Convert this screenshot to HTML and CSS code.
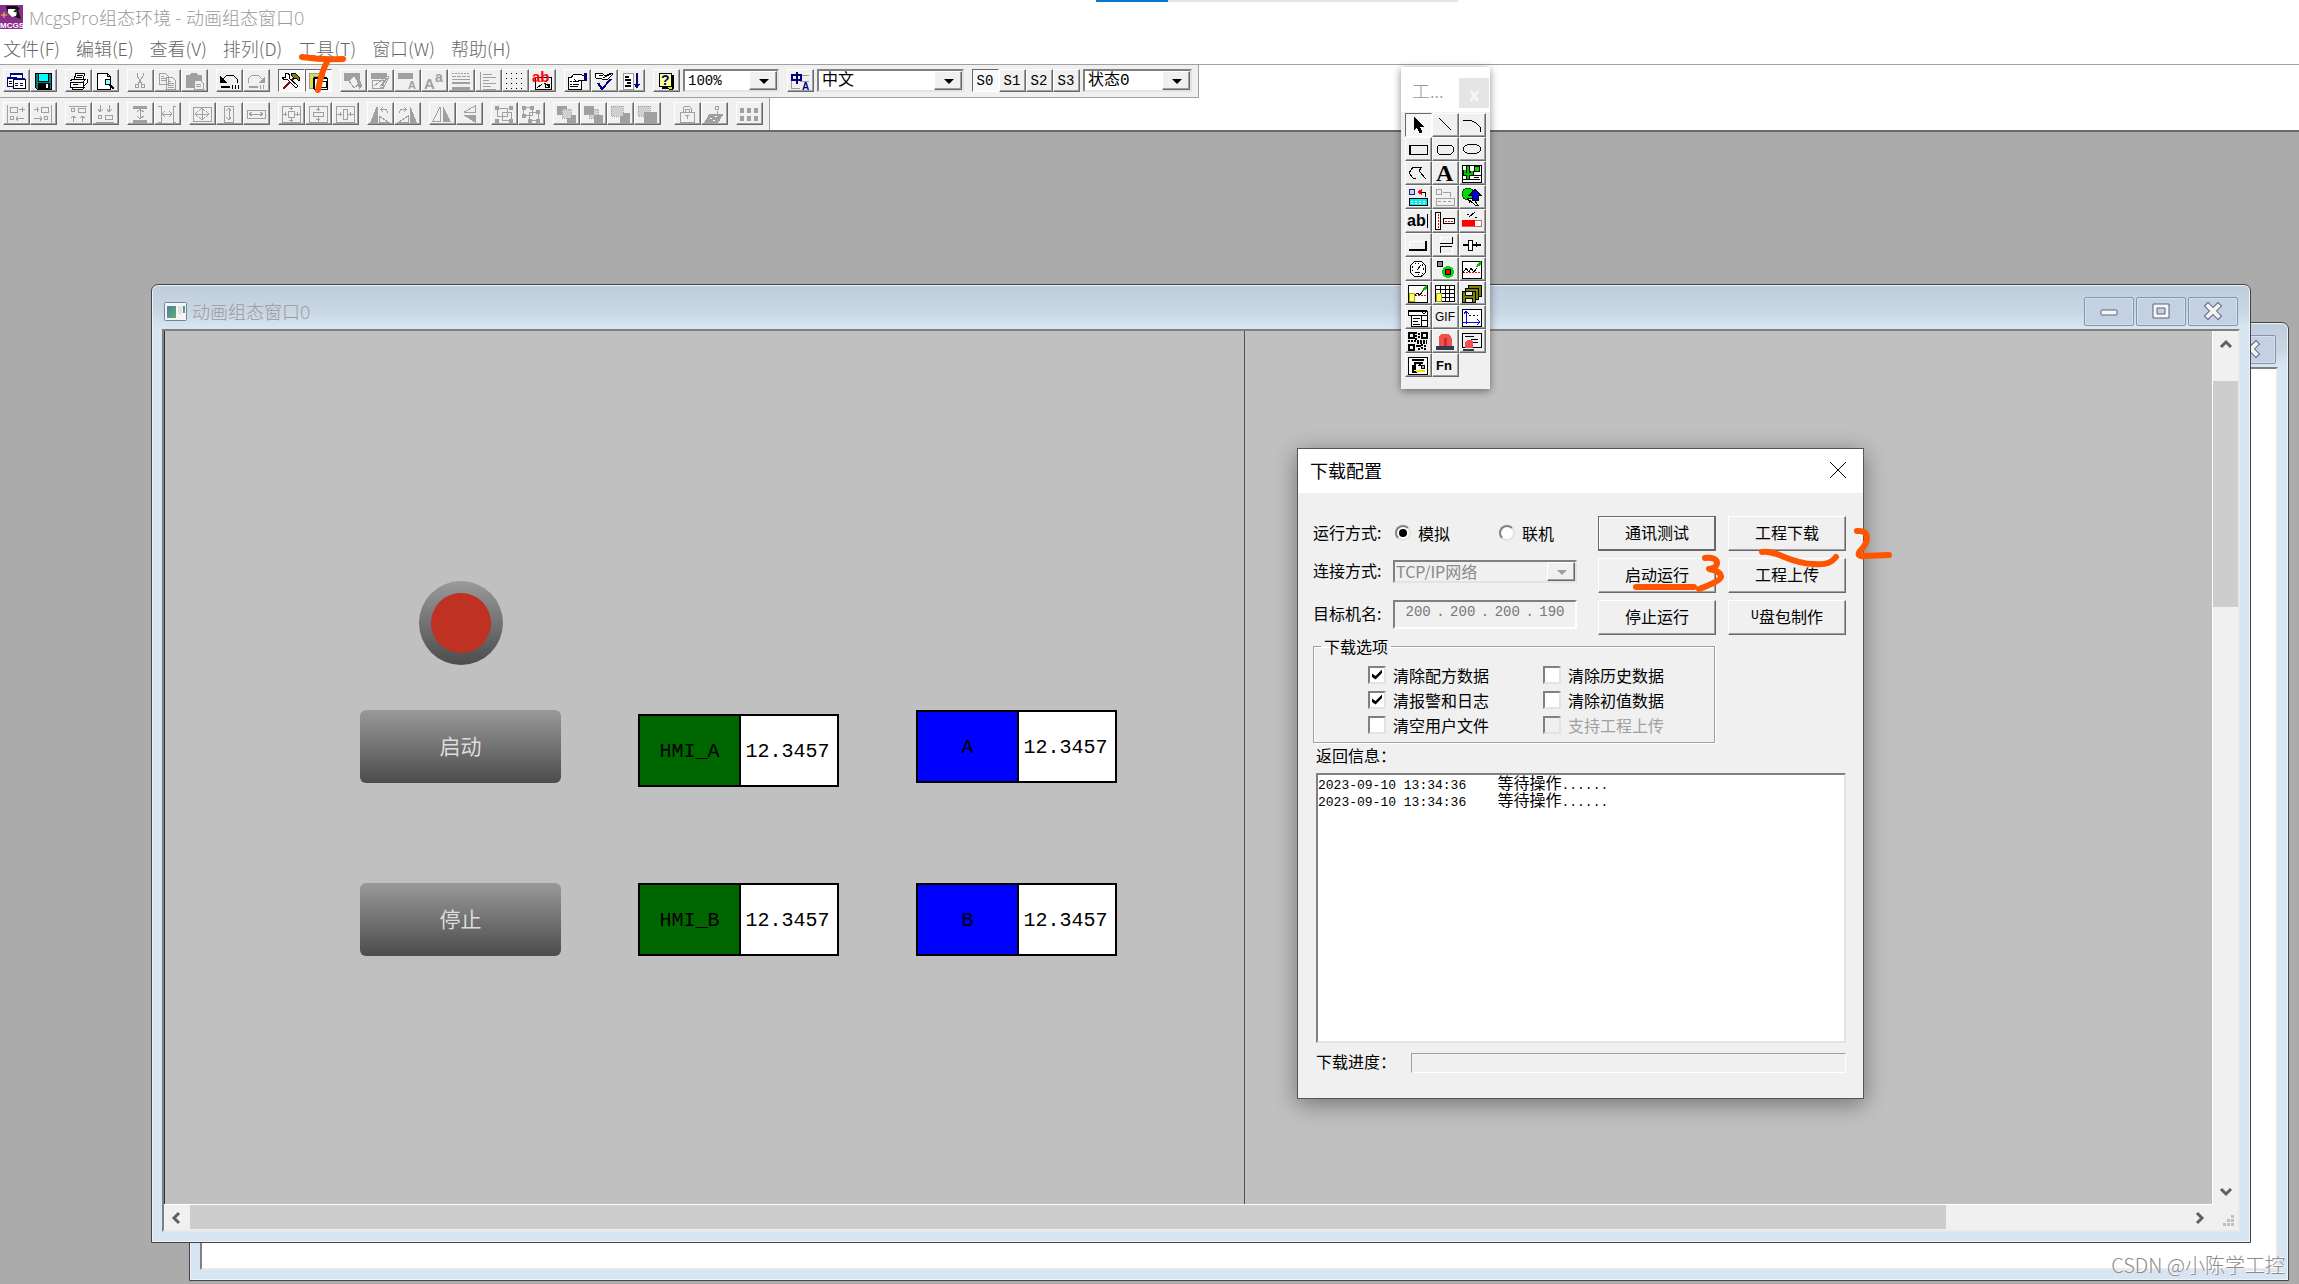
FILE: index.html
```html
<!DOCTYPE html>
<html lang="zh-CN">
  <head>
    <meta charset="UTF-8">
    <meta name="viewport" content="width=device-width, initial-scale=1.0">
    <title>McgsPro组态环境 - 动画组态窗口0</title>
    <link rel="stylesheet" href="styles.css">
  </head>
  <body>
    <header class="titlebar">
      <svg class="app-logo" viewBox="0 0 23 24">
        <rect width="23" height="24" fill="#8a2d8c"/>
        <path d="M6 1h11l3 3-2 1 3 9-6-2-6-3-2-4z" fill="#111"/>
        <path d="M8 4h7l2 3-1 4-4 1-4-4z" fill="#fff"/>
        <path d="M13 6l3-1 1 3" fill="#111"/>
        <path d="M1 10h6M4 7v6" stroke="#e8d040"/>
        <text x="0" y="23" font-size="8" font-weight="700" class="white">MCGS</text>
      </svg>
      <span>McgsPro组态环境 - 动画组态窗口0</span>
    </header>
    <nav class="menubar">
      <button>文件(F)</button>
      <button>编辑(E)</button>
      <button>查看(V)</button>
      <button>排列(D)</button>
      <button>工具(T)</button>
      <button>窗口(W)</button>
      <button>帮助(H)</button>
    </nav>

    <div class="toolbar toolbar-main">
      <div class="group">
        <button aria-label="工作台"><svg viewBox="0 0 20 18"><path d="M4 1h12v11H4z" fill="#fff" stroke="#000080"/><path d="M4 2h12" stroke="#000080" stroke-width="2"/><path d="M1 5h9v9H1z" fill="#fff" stroke="#000080"/><path d="M1 6h9" stroke="#000080" stroke-width="2"/><path d="M3 9h3M3 11h3"/><path d="M7 7h12v9H7z" fill="#fff"/><path d="M7 7h12" stroke="#000080" stroke-width="2"/><path d="M9 11h3M14 11h3M9 13h3M14 13h3" stroke="#000080"/></svg></button>
        <button aria-label="保存"><svg viewBox="0 0 20 18"><path d="M2 1h16v16H4l-2-2z" fill="#008080"/><path d="M5 1h10v8H5z" fill="#0ff"/><path d="M5 11h11v6H5z" fill="#000"/><path d="M13 12h2v4h-2z" fill="#fff" stroke="none"/></svg></button>
      </div>
      <div class="group">
        <button aria-label="打印"><svg viewBox="0 0 20 18"><path d="M6 8l2-7h9l-2 7M2 9l3-2h13l-3 3H2v5h13l4-4V7M15 10v5M4 15v2h11l2-2" fill="#fff"/><path d="M2 10h13M3 15h13M9 3h6M8 5h6M5 12h8"/><path d="M10 12h3" stroke="#dd0"/></svg></button>
        <button aria-label="打印预览"><svg viewBox="0 0 20 18"><path d="M2 1h10l3 3v13H2z" fill="#fff"/><path d="M12 1v3h3"/><circle cx="13" cy="10" r="3" fill="#8ff"/><path d="M15 13l4 4" stroke-width="2"/></svg></button>
      </div>
      <div class="group">
        <button disabled aria-label="剪切"><svg viewBox="0 0 20 18"><path d="M7 1v3l5 8M13 1v3l-5 8"/><circle cx="7" cy="14" r="2"/><circle cx="13" cy="14" r="2"/></svg></button>
        <button disabled aria-label="复制"><svg viewBox="0 0 20 18"><path d="M2 1h6l3 3v8H2zM4 4h3M4 6h5M4 8h5M9 5h6l3 3v9H9z" fill="#f0f0f0"/><path d="M11 9h3M11 11h6M11 13h6M11 15h6"/></svg></button>
        <button disabled aria-label="粘贴"><svg viewBox="0 0 20 18"><path d="M2 3h4l2-2h4l2 2h3v12H2z" fill="#a0a0a0"/><path d="M10 8h6l3 3v6h-9z" fill="#f0f0f0"/><path d="M12 12h5M12 14h5M6 4h8"/></svg></button>
      </div>
      <div class="group">
        <button aria-label="撤消"><svg viewBox="0 0 20 18"><path d="M4 7l4-4h6l4 4v4"/><path d="M1 4v7h7z" fill="#000" stroke="none"/><path d="M2 15h9" stroke-width="2"/><path d="M13 13v4M16 13v4M19 13v4"/></svg></button>
        <button disabled aria-label="重做"><svg viewBox="0 0 20 18"><path d="M16 7l-4-4H6L2 7v4"/><path d="M19 4v7h-7z" fill="#a0a0a0" stroke="none"/><path d="M3 15h9" stroke-width="2"/><path d="M14 13v4M17 13v4"/></svg></button>
      </div>
      <div class="group">
        <button class="pressed" aria-label="工具箱"><svg viewBox="0 0 20 18"><path d="M2 17L14 5" stroke="#7a1010" stroke-width="2"/><path d="M10 2l4-1 5 5-1 3-3-3-2 1z" fill="#808000"/><path d="M4 2v3H1l2 3 3-1 9 9 2-2-9-8 1-3-3-2z" fill="#fff"/></svg></button>
        <button class="pressed" aria-label="绘图工具"><svg viewBox="0 0 20 18"><path d="M1 1h15v3H5v12H1z" fill="#dcdc50" stroke="#999"/><path d="M6 6h13v11H6z" fill="#fff"/><path d="M6 6h13M6 6v11" stroke-width="2"/><path d="M9 9h9v6H9z"/></svg></button>
      </div>
      <div class="group">
        <button disabled aria-label="填充色"><svg viewBox="0 0 20 18"><path d="M1 1h15v7H1z" class="solid"/><path d="M6 9l5-5 6 7-6 5z" fill="#f0f0f0"/><path d="M13 5l3 2 3 7-3 3" class="solid"/></svg></button>
        <button disabled aria-label="线色"><svg viewBox="0 0 20 18"><path d="M1 1h15v5H1z" class="solid"/><path d="M2 8h11v8H2zM4 14l13-10 2 1-5 10-4 1" fill="#f0f0f0"/><path d="M11 14l6-8" stroke-width="2"/></svg></button>
        <button disabled aria-label="字符色"><svg viewBox="0 0 20 18"><path d="M1 1h14v5H1z" class="solid"/><text x="11" y="17" font-size="11" font-weight="700">A</text></svg></button>
        <button disabled aria-label="字符字体"><svg viewBox="0 0 20 18"><text x="0" y="17" font-size="15" font-weight="700">A</text><text x="11" y="10" font-size="14" font-weight="700">a</text></svg></button>
        <button disabled aria-label="线型"><svg viewBox="0 0 20 18"><path d="M1 1h18" stroke-dasharray="2 1"/><path d="M1 4h18" stroke-dasharray="4 1"/><path d="M1 7h18"/><path d="M1 11h18" stroke-width="2"/><path d="M1 16h18" stroke-width="3"/></svg></button>
        <button disabled aria-label="对齐"><svg viewBox="0 0 20 18"><path d="M2 0v18M5 2h9M5 5h13M5 8h6M5 11h13M5 14h8M5 17h13"/></svg></button>
        <button aria-label="网格"><svg viewBox="0 0 20 18"><path d="M1 1h19M1 6h19M1 11h19M1 16h19" stroke-dasharray="1 4"/></svg></button>
        <button aria-label="字符边距"><svg viewBox="0 0 20 18"><path d="M3 5h16v12H3z"/><path d="M5 16l5-4M18 15l-6-4M13 12h4v3h-4z"/><text x="0" y="10" font-size="15" font-weight="700" class="red">ab</text></svg></button>
      </div>
      <div class="group">
        <button aria-label="属性"><svg viewBox="0 0 20 18"><path d="M1 5h13v12H1z" fill="#fff"/><path d="M3 9h2M6 9h6M3 12h2M6 12h6M3 14h8"/><path d="M4 6l3-4h6l4 2v4h-5l-2 2-3-3" fill="#fff"/><path d="M18 1v8" stroke="#000080" stroke-width="3"/></svg></button>
        <button aria-label="组态检查"><svg viewBox="0 0 20 18"><path d="M1 1h7l3 3 6-3 2 1-5 5H8L6 6H2z" fill="#fff"/><path d="M5 3h4M9 6l8-4"/><path d="M4 11l4 6 9-10" stroke="#000080" stroke-width="2"/></svg></button>
        <button aria-label="排序"><svg viewBox="0 0 20 18"><path d="M2 1h10v16H2z" fill="#fff" stroke="#999"/><path d="M4 5h4M4 8h6M6 11h4M4 14h6" stroke-width="2"/><path d="M16 1v13" stroke="#000080" stroke-width="2"/><path d="M13 12h6l-3 5z" fill="#000080" stroke="none"/></svg></button>
      </div>
      <div class="group">
        <button aria-label="帮助"><svg viewBox="0 0 20 18"><path d="M6 3h11v13H6z" fill="#000"/><path d="M3 1h12v13H3z" fill="#ff9"/><path d="M10 14h6v3h-3z" fill="#ee0"/><text x="5" y="13" font-size="14" font-weight="700" class="blue">?</text></svg></button>
        <span class="combo combo-zoom"><select aria-label="缩放"><option>100%</option></select></span>
      </div>
      <div class="group">
        <button aria-label="语言"><svg viewBox="0 0 20 18"><path d="M1 3h18M10 9h9M1 9v7h9" stroke="#999"/><path d="M2 3h9v5H2zM7 0v12" stroke="#000080" stroke-width="2"/><text x="12" y="18" font-size="10" font-weight="700" class="blue">A</text></svg></button>
        <span class="combo combo-lang"><select aria-label="语言选择"><option>中文</option></select></span>
      </div>
      <div class="group">
        <button class="pressed">S0</button>
        <button>S1</button>
        <button>S2</button>
        <button>S3</button>
        <span class="combo combo-state"><select aria-label="状态"><option>状态0</option></select></span>
      </div>
    </div>

    <div class="toolbar">
      <div class="group">
        <button disabled aria-label="左对齐"><svg viewBox="0 0 20 18"><path d="M1 0v18M4 2h7v5H4zM13 4h6M16 2v5M10 13h8M12 11l-2 2 2 3"/><circle cx="6" cy="13" r="2"/></svg></button>
        <button disabled aria-label="右对齐"><svg viewBox="0 0 20 18"><path d="M18 0v18M8 2h7v5H8zM1 4h5M4 2v5M1 13h8M7 11l2 2-2 3"/><circle cx="13" cy="13" r="2"/></svg></button>
      </div>
      <div class="group">
        <button disabled aria-label="顶对齐"><svg viewBox="0 0 20 18"><path d="M1 1h18M10 3h7v4h-7zM5 17v-6M3 13l2-2 3 2M14 17v-6M12 13l2-2 3 2"/><circle cx="5" cy="5" r="2"/></svg></button>
        <button disabled aria-label="底对齐"><svg viewBox="0 0 20 18"><path d="M1 17h18M10 10h7v4h-7zM5 0v7M3 4l2 3 3-3M14 0v7M12 4l2 3 3-3"/><circle cx="5" cy="12" r="2"/></svg></button>
      </div>
      <div class="group">
        <button disabled aria-label="纵向等间距"><svg viewBox="0 0 20 18"><path d="M3 2h14M3 16h14" stroke-width="3"/><path d="M10 4v10M7 7l3-3 4 3M7 11l3 3 4-3"/></svg></button>
        <button disabled aria-label="横向等间距"><svg viewBox="0 0 20 18"><path d="M1 1h3v16H1M19 1h-3v16h3M5 9h10M8 6L5 9l3 3M12 6l3 3-3 3"/></svg></button>
      </div>
      <div class="group">
        <button disabled aria-label="等高宽"><svg viewBox="0 0 20 18"><path d="M1 2h18v14H1zM3 9h14M10 3v12M6 6L3 9l3 3M14 6l3 3-3 3M7 6l3-3 3 3M7 12l3 3 3-3"/></svg></button>
        <button disabled aria-label="等高"><svg viewBox="0 0 20 18"><path d="M5 1h9v16H5zM10 3v12M7 6l3-3 2 3M7 12l3 3 2-3"/></svg></button>
        <button disabled aria-label="等宽"><svg viewBox="0 0 20 18"><path d="M1 5h18v8H1zM3 9h14M6 7L3 9l3 2M14 7l3 2-3 2"/></svg></button>
      </div>
      <div class="group">
        <button disabled aria-label="窗口居中"><svg viewBox="0 0 20 18"><path d="M1 1h18v16H1zM7 6h6v6H7zM10 1v4M10 13v4M1 9h5M14 9h5"/><path d="M8 3h4M8 15h4M4 7v4M16 7v4"/></svg></button>
        <button disabled aria-label="纵向居中"><svg viewBox="0 0 20 18"><path d="M1 1h18v16H1zM5 7h10v4H5zM10 1v5M10 12v5M8 4h4M8 14h4"/></svg></button>
        <button disabled aria-label="横向居中"><svg viewBox="0 0 20 18"><path d="M1 1h18v16H1zM8 4h4v10H8zM1 9h6M13 9h6M5 7v4M15 7v4"/></svg></button>
      </div>
      <div class="group">
        <button disabled aria-label="左旋"><svg viewBox="0 0 20 18"><path d="M7 2v15H1z" class="solid"/><path d="M9 17v-6l9 6zM10 5l3-3M10 4h6l2 4M10 4l3 3"/></svg></button>
        <button disabled aria-label="右旋"><svg viewBox="0 0 20 18"><path d="M13 2v15h6z" class="solid"/><path d="M11 17v-6l-9 6zM10 5L7 2M10 4H4L2 8M10 4L7 7"/></svg></button>
      </div>
      <div class="group">
        <button disabled aria-label="左右镜像"><svg viewBox="0 0 20 18"><path d="M8 2v14H1z"/><path d="M11 2v14h7z" class="solid"/></svg></button>
        <button disabled aria-label="上下镜像"><svg viewBox="0 0 20 18"><path d="M16 1v6H5z"/><path d="M16 17v-7H5z" class="solid"/></svg></button>
      </div>
      <div class="group">
        <button disabled aria-label="构成图符"><svg viewBox="0 0 20 18"><path d="M3 3h10v8H3zM8 7h9v8H8z"/><path d="M1 1h3v3H1zM15 1h3v3h-3zM1 14h3v3H1zM15 14h3v3h-3z" class="solid"/></svg></button>
        <button disabled aria-label="分解图符"><svg viewBox="0 0 20 18"><path d="M2 2h9v8H2zM8 7h9v8H8z"/><path d="M1 1h3v3H1zM9 1h3v3H9zM1 9h3v3H1zM15 5h3v3h-3zM7 14h3v3H7zM15 14h3v3h-3z" class="solid"/></svg></button>
      </div>
      <div class="group">
        <button disabled aria-label="置顶"><svg viewBox="0 0 20 18"><path d="M1 1h9v8H1zM11 10h8v7h-8z" class="solid"/><path d="M6 4h9v9H6z" class="dither"/></svg></button>
        <button disabled aria-label="置底"><svg viewBox="0 0 20 18"><path d="M6 4h9v9H6z" class="dither"/><path d="M1 1h9v8H1zM11 10h8v7h-8z" class="solid"/></svg></button>
        <button disabled aria-label="前移一层"><svg viewBox="0 0 20 18"><path d="M10 8h9v9h-9z" class="solid"/><path d="M1 1h12v10H1z" class="dither"/></svg></button>
        <button disabled aria-label="后移一层"><svg viewBox="0 0 20 18"><path d="M1 1h12v10H1z" class="dither"/><path d="M7 7h12v10H7z" class="solid"/></svg></button>
      </div>
      <div class="group group-lock">
        <button disabled aria-label="锁定"><svg viewBox="0 0 20 18"><path d="M3 7h14v10H3zM6 7V3l2-2h4l2 2v4M8 7V4h4v3M8 10h4M10 10v4"/></svg></button>
        <button disabled aria-label="固化"><svg viewBox="0 0 20 18"><circle cx="13" cy="3" r="2"/><path d="M13 6v6"/><path d="M6 9h13l-5 8H1z" class="solid"/><path d="M6 13h2M11 11h2M9 15h2" stroke="#fff"/></svg></button>
      </div>
      <div class="group">
        <button disabled aria-label="多重复制"><svg viewBox="0 0 20 18"><path d="M1 3h4v5H1zM8 3h4v5H8zM15 3h4v5h-4zM1 11h4v5H1zM8 11h4v5H8zM15 11h4v5h-4z" class="solid bare"/></svg></button>
      </div>
    </div>

    <main class="workspace">
      <section class="window window-back">
        <div class="window-title">
          <div class="window-buttons">
            <button aria-label="最小化"></button>
            <button aria-label="最大化"></button>
            <button aria-label="关闭"><svg viewBox="0 0 20 18"><path d="M5 4l10 10M15 4L5 14" stroke="#5a6478" stroke-width="6" stroke-linecap="square"/><path d="M5 4l10 10M15 4L5 14" stroke="#f2f2f2" stroke-width="4" stroke-linecap="square"/></svg></button>
          </div>
        </div>
        <div class="window-client"></div>
      </section>

      <section class="window window-front">
        <div class="window-title">
          <svg class="window-icon" viewBox="0 0 23 19">
            <defs><linearGradient id="pane" x1="0" y1="0" x2="1" y2="1"><stop offset="0" stop-color="#4a7fa8"/><stop offset="1" stop-color="#5cb070"/></linearGradient></defs>
            <rect x="0.500" y="0.500" width="22" height="18" rx="1" fill="#f4f4f4" stroke="#75828f"/>
            <path d="M3 4h9v12H3z" fill="url(#pane)"/>
            <path d="M14 4h4v8h-4z" fill="#e2e2e2"/>
            <path d="M19 4h2v7h-2z" fill="url(#pane)"/>
          </svg>
          <span>动画组态窗口0</span>
          <div class="window-buttons">
            <button aria-label="最小化"><svg viewBox="0 0 20 18"><rect x="2" y="8" width="16" height="5" rx="1" fill="#f6f6f6" stroke="#5a6478"/></svg></button>
            <button aria-label="最大化"><svg viewBox="0 0 20 18"><path d="M2 2h16v14H2zM6 6v6h8V6z" fill="#f6f6f6" fill-rule="evenodd" stroke="#5a6478"/></svg></button>
            <button aria-label="关闭"><svg viewBox="0 0 20 18"><path d="M5 4l10 10M15 4L5 14" stroke="#5a6478" stroke-width="6" stroke-linecap="square"/><path d="M5 4l10 10M15 4L5 14" stroke="#f2f2f2" stroke-width="4" stroke-linecap="square"/></svg></button>
          </div>
        </div>
        <div class="window-client">
          <div class="canvas">
            <div class="screen-edge"></div>
            <div class="lamp"></div>
            <button class="hmi-button hmi-start">启动</button>
            <button class="hmi-button hmi-stop">停止</button>
            <div class="field field-hmi-a"><span class="field-name green">HMI_A</span><span class="field-value">12.3457</span></div>
            <div class="field field-hmi-b"><span class="field-name green">HMI_B</span><span class="field-value">12.3457</span></div>
            <div class="field field-a"><span class="field-name">A</span><span class="field-value">12.3457</span></div>
            <div class="field field-b"><span class="field-name">B</span><span class="field-value">12.3457</span></div>
          </div>
          <div class="scroll scroll-v">
            <button aria-label="向上"><svg viewBox="0 0 14 14"><path d="M2 10l5-5 5 5"/></svg></button>
            <div class="track"><div class="thumb"></div></div>
            <button aria-label="向下"><svg viewBox="0 0 14 14"><path d="M2 5l5 5 5-5"/></svg></button>
          </div>
          <div class="scroll scroll-h">
            <button aria-label="向左"><svg viewBox="0 0 14 14"><path d="M9 2L4 7l5 5"/></svg></button>
            <div class="track"><div class="thumb"></div></div>
            <button aria-label="向右"><svg viewBox="0 0 14 14"><path d="M5 2l5 5-5 5"/></svg></button>
          </div>
          <div class="size-grip"><svg viewBox="0 0 12 12"><path d="M8 0h3v3H8zM4 4h3v3H4zM8 4h3v3H8zM0 8h3v3H0zM4 8h3v3H4zM8 8h3v3H8z"/></svg></div>
        </div>
      </section>
    </main>

    <aside class="toolbox">
      <div class="toolbox-title"><span>工...</span><button aria-label="关闭工具箱">x</button></div>
      <div class="toolbox-grid">
        <button class="pressed" aria-label="选择"><svg viewBox="0 0 22 20"><path d="M7 2v13l3-3 3 6 2-1-3-6h4z" fill="#000"/></svg></button>
        <button aria-label="直线"><svg viewBox="0 0 22 20"><path d="M5 3l12 12"/></svg></button>
        <button aria-label="弧线"><svg viewBox="0 0 22 20"><path d="M2 5h7l6 3 4 4 1 5"/></svg></button>
        <button aria-label="矩形"><svg viewBox="0 0 22 20"><path d="M2 6h18v9H2z"/><path d="M3 6v9"/></svg></button>
        <button aria-label="圆角矩形"><svg viewBox="0 0 22 20"><path d="M5 6h12l2 2v5l-2 2H5l-2-2V8z"/></svg></button>
        <button aria-label="椭圆"><svg viewBox="0 0 22 20"><ellipse cx="11" cy="10" rx="9" ry="5"/></svg></button>
        <button aria-label="折线"><svg viewBox="0 0 22 20"><path d="M9 15H6l-4-5 4-6h9l-3 4 7 8"/></svg></button>
        <button aria-label="标签"><svg viewBox="0 0 22 20"><text x="2" y="18" font-size="24" class="serif">A</text></svg></button>
        <button aria-label="位图"><svg viewBox="0 0 22 20"><path d="M1 2h19v17H1z" fill="#fff"/><path d="M7 3v13M4 7v4h7V8M11 8v4" stroke="#000" stroke-width="4"/><path d="M7 3v13M4 7v4h7V8" stroke="#00c800" stroke-width="2"/><circle cx="16" cy="6" r="3" fill="#0d0"/><path d="M11 12h9M2 16h17M13 14h5"/></svg></button>
        <button aria-label="插入元件"><svg viewBox="0 0 22 20"><circle cx="5" cy="5" r="3" fill="#ccf" stroke="#226"/><path d="M10 5l5-3v6z" fill="red" stroke="none"/><path d="M14 5h4v5"/><path d="M2 11h18v7H2z" fill="#0ee"/><path d="M4 14h14M4 16h14" stroke="#fff" stroke-dasharray="2 2"/></svg></button>
        <button disabled aria-label="保存元件"><svg viewBox="0 0 22 20"><circle cx="5" cy="5" r="3"/><path d="M9 5h7v5M2 11h18v7H2zM4 14h3M9 14h3M14 14h3"/></svg></button>
        <button aria-label="常用符号"><svg viewBox="0 0 22 20"><circle cx="7" cy="7" r="6" fill="#0d0" stroke="#050"/><path d="M6 11h7v2l4 5h-3zM6 11l3 5" fill="#fff"/><path d="M14 2l6 6h-3v5h-6V8H8z" fill="#0000c8"/></svg></button>
        <button aria-label="输入框"><svg viewBox="0 0 22 20"><text x="0" y="15" font-size="16" font-weight="700">ab</text><path d="M20 3v14"/></svg></button>
        <button aria-label="流动块"><svg viewBox="0 0 22 20"><path d="M1 1h5v17H1zM9 7h11v5H9z" fill="#fff"/><path d="M4 3v14M11 10h9" stroke="red" stroke-dasharray="2 1"/></svg></button>
        <button aria-label="百分比填充"><svg viewBox="0 0 22 20"><path d="M1 9h19v6H1z" fill="#fff" stroke="#c66"/><path d="M1 9h13v6H1z" fill="red" stroke="none"/><path d="M8 6l6-5M6 3h2M14 6h2"/></svg></button>
        <button aria-label="标准按钮"><svg viewBox="0 0 22 20"><path d="M2 6v9M2 6h16" stroke="#fff"/><path d="M2 15h17V6" stroke-width="2"/></svg></button>
        <button aria-label="动画按钮"><svg viewBox="0 0 22 20"><path d="M6 8h12V2M18 11H6v7"/><path d="M6 2v6M6 2h11M18 11v7H6" stroke="#fff"/></svg></button>
        <button aria-label="滑动输入器"><svg viewBox="0 0 22 20"><path d="M2 10h18" stroke-width="2"/><path d="M7 5h4v10H7z" fill="#fff"/><path d="M15 7v5"/></svg></button>
        <button aria-label="旋转仪表"><svg viewBox="0 0 22 20"><circle cx="11" cy="10" r="8" fill="#fff"/><circle cx="11" cy="10" r="6" stroke-dasharray="1 3"/><path d="M10 11l4-5M8 13h5"/></svg></button>
        <button aria-label="动画显示"><svg viewBox="0 0 22 20"><circle cx="6" cy="5" r="3" fill="#888"/><circle cx="14" cy="13" r="6" fill="#0d0" stroke="none"/><circle cx="14" cy="13" r="3" fill="red"/></svg></button>
        <button aria-label="实时曲线"><svg viewBox="0 0 22 20"><path d="M1 2h19v17H1z" fill="#fff"/><path d="M2 13h17" stroke="red" stroke-dasharray="2 1"/><path d="M2 14l3-5 3 4 2-4 3 4 3-4"/><path d="M15 8l4-5v3z" fill="#0b0" stroke="#0b0"/></svg></button>
        <button aria-label="历史曲线"><svg viewBox="0 0 22 20"><path d="M1 2h19v17H1z" fill="#fff"/><path d="M5 12h14" stroke="red" stroke-dasharray="2 1"/><path d="M7 14l3-4 3 2 3-4"/><path d="M15 8l4-5v3z" fill="#0b0" stroke="#0b0"/><path d="M2 10h5v8H2z" fill="#ff6" stroke="#aa0"/></svg></button>
        <button aria-label="报表"><svg viewBox="0 0 22 20"><path d="M1 2h19v16H1zM1 6h19M1 10h19M1 14h19M6 2v16M11 2v16M15 2v16" fill="#fff"/><path d="M2 10h5v8H2z" fill="#ff6" stroke="#aa0"/></svg></button>
        <button aria-label="存盘数据浏览"><svg viewBox="0 0 22 20"><path d="M7 2h13v11H7z" fill="#808000"/><path d="M4 5h13v11H4z" fill="#808000"/><path d="M1 8h13v11H1z" fill="#808000"/><path d="M4 8h7v4H4zM4 15h7v4H4z" fill="#f0f0f0"/></svg></button>
        <button aria-label="下拉框"><svg viewBox="0 0 22 20"><path d="M1 4h19v4H1zM4 8h16v11H4z" fill="#fff"/><path d="M15 5l2 2 2-2M6 11h7M6 14h5M6 17h7M14 8v11M15 13h5"/><path d="M1 4h19" stroke-width="2"/></svg></button>
        <button aria-label="GIF"><svg viewBox="0 0 22 20"><text x="1" y="14" font-size="12">GIF</text></svg></button>
        <button aria-label="相对曲线"><svg viewBox="0 0 22 20"><path d="M1 2h19v17H1z" fill="#fff"/><path d="M5 17V4M3 7l2-3 3 3M2 15h16M16 12l3 3-3 3" stroke="#00f"/><path d="M8 8h9" stroke-dasharray="2 2"/></svg></button>
        <button aria-label="二维码"><svg viewBox="0 0 22 20"><path d="M2 2h5v5H2zM15 2h5v5h-5zM2 14h5v5H2z" stroke-width="2"/><path d="M9 1v9M12 2v6M1 10h19M10 12h10M12 14v5M15 13v6M18 14v5M9 15h5" stroke-width="2" stroke-dasharray="2 1"/></svg></button>
        <button aria-label="报警浏览"><svg viewBox="0 0 22 20"><path d="M5 16V7l3-4h6l3 4v9z" fill="#f05050" stroke="#f05050"/><path d="M10 7h3v8h-3z" fill="#d03030" stroke="none"/><path d="M2 17h18" stroke="#2c3e50" stroke-width="4"/></svg></button>
        <button aria-label="报警显示"><svg viewBox="0 0 22 20"><path d="M1 2h19v14H1z" fill="#f0f0f0"/><path d="M4 5h9M10 8h7M12 11h5"/><path d="M4 17v-6l2-2h4l2 2v6z" fill="#f05050" stroke="none"/><path d="M2 19h11" stroke="#2c3e50" stroke-width="2"/></svg></button>
        <button aria-label="自由图表"><svg viewBox="0 0 22 20"><path d="M1 2h19v17H1z" fill="#fff"/><path d="M5 5h12M7 8h9M6 10v7h4M8 8v7M14 8l-2 3" stroke-width="2"/><path d="M9 15h9v2H9z" fill="#fd0" stroke="none"/><path d="M14 10h3v3h-3z" fill="#aac"/></svg></button>
        <button aria-label="函数"><svg viewBox="0 0 22 20"><text x="2" y="15" font-size="13" font-weight="700">Fn</text></svg></button>
      </div>
    </aside>

    <form class="dialog" role="dialog" aria-labelledby="dialogTitle">
      <div class="dialog-title">
        <h1 id="dialogTitle">下载配置</h1>
        <button type="button" aria-label="关闭"><svg viewBox="0 0 16 16"><path d="M0 0l16 16M16 0L0 16"/></svg></button>
      </div>
      <div class="dialog-body">
        <div class="dialog-top">
          <div class="settings">
            <div class="row">
              <span class="row-label">运行方式:</span>
              <label class="radio"><input type="radio" name="mode" checked>模拟</label>
              <label class="radio"><input type="radio" name="mode">联机</label>
            </div>
            <div class="row">
              <label class="row-label" for="link">连接方式:</label>
              <span class="combo combo-link"><select id="link" disabled><option>TCP/IP网络</option></select></span>
            </div>
            <div class="row row-host">
              <span class="row-label">目标机名:</span>
              <span class="ip">
                <input type="text" value="200" aria-label="地址第一段" disabled>.
                <input type="text" value="200" aria-label="地址第二段" disabled>.
                <input type="text" value="200" aria-label="地址第三段" disabled>.
                <input type="text" value="190" aria-label="地址第四段" disabled>
              </span>
            </div>
          </div>
          <div class="actions">
            <button type="button" class="default">通讯测试</button>
            <button type="button">工程下载</button>
            <button type="button">启动运行</button>
            <button type="button">工程上传</button>
            <button type="button">停止运行</button>
            <button type="button"><span class="ascii">U</span>盘包制作</button>
          </div>
        </div>
        <fieldset class="options">
          <legend>下载选项</legend>
          <label><input type="checkbox" checked>清除配方数据</label>
          <label><input type="checkbox">清除历史数据</label>
          <label><input type="checkbox" checked>清报警和日志</label>
          <label><input type="checkbox">清除初值数据</label>
          <label><input type="checkbox">清空用户文件</label>
          <label class="off"><input type="checkbox" disabled>支持工程上传</label>
        </fieldset>
        <div class="log-label">返回信息：</div>
        <div class="log">
          <p><span class="ascii">2023-09-10 13:34:36    </span>等待操作<span class="ascii">......</span></p>
          <p><span class="ascii">2023-09-10 13:34:36    </span>等待操作<span class="ascii">......</span></p>
        </div>
        <div class="progress-row">
          <span>下载进度：</span>
          <div class="progress" role="progressbar" aria-label="下载进度"></div>
        </div>
      </div>
    </form>

    <div class="drag-strip"></div>

    <svg class="marks" aria-hidden="true">
      <path d="M302 57q20 3 41 2M327 62q-5 8-9 28"/>
      <path d="M1857 531q10-1 10 7 0 6-7 13-4 6 4 5l25-1"/>
      <path d="M1762 552c16-2 28 12 52 12 14 1 18-2 22-7"/>
      <path d="M1705 558q12-1 12 5 0 5-8 6 12 2 12 8 0 4-22 12M1636 587h58"/>
    </svg>
    <div class="watermark">CSDN @小陈学工控</div>
  </body>
</html>
```
FILE: styles.css
```css
* {
  box-sizing: border-box;
  margin: 0;
  padding: 0;
}

body {
  position: relative;
  display: flex;
  flex-direction: column;
  min-height: 100vh;
  overflow: hidden;
  font-family: "Noto Sans CJK SC", sans-serif;
  font-size: 18px;
  background: #fff;
}

button,
input,
select {
  font: inherit;
  color: inherit;
}

button {
  display: flex;
  align-items: center;
  justify-content: center;
  border: none;
  background: none;
}

svg {
  overflow: visible;
  fill: none;
  stroke: currentColor;
}

svg text {
  fill: currentColor;
  stroke: none;
  font-family: "Liberation Sans", sans-serif;
}

svg .serif {
  font-family: "Liberation Serif", serif;
  font-weight: 700;
}

svg .red {
  fill: #f00;
}

svg .blue {
  fill: #000080;
}

svg .white {
  fill: #fff;
}

svg .solid {
  fill: currentColor;
}

svg .bare {
  stroke: none;
}

svg .dither {
  fill: #d0d0d0;
  stroke-dasharray: 1 1;
}

.titlebar {
  display: flex;
  align-items: center;
  gap: 6px;
  height: 34px;
  color: #999;
  font-family: "Open Sans", "Noto Sans CJK SC", sans-serif;
  font-weight: 300;
}

.app-logo {
  width: 23px;
  height: 24px;
  stroke: none;
}

.menubar {
  display: flex;
  gap: 16px;
  height: 31px;
  padding: 0 0 3px 3px;
  border-bottom: 1px solid #a0a0a0;
  color: #666;
  font-weight: 300;
}

/* Toolbars */
.toolbar {
  display: flex;
  gap: 8px;
  width: fit-content;
  padding: 4px 6px 5px 3px;
  background: #f0f0f0;
  border-right: 1px solid #a0a0a0;
}

.toolbar-main {
  border-bottom: 1px solid #a0a0a0;
}

.group {
  display: flex;
}

.group-lock {
  margin-left: 5px;
}

.toolbar button,
.toolbox-grid button {
  width: 27px;
  height: 23px;
  padding-right: 1px;
  border: 1px solid;
  border-color: #fff #696969 #696969 #fff;
  box-shadow: inset -1px -1px #a0a0a0;
  background: #f0f0f0;
  color: #000;
  font-family: "Liberation Mono", monospace;
  font-size: 14px;
}

.toolbar button:disabled,
.toolbox-grid button:disabled {
  color: #a0a0a0;
}

.toolbar button.pressed,
.toolbox-grid button.pressed {
  border-color: #696969 #fff #fff #696969;
  box-shadow: none;
  background: #f8f8f8;
}

.toolbar svg {
  width: 20px;
  height: 18px;
  shape-rendering: crispEdges;
}

.combo {
  position: relative;
  display: flex;
  height: 23px;
  border: 2px solid;
  border-color: #808080 #e3e3e3 #e3e3e3 #808080;
  background: #fff;
}

.combo select {
  width: 100%;
  padding: 0 26px 0 3px;
  border: none;
  appearance: none;
  background: none;
  font-family: "Liberation Mono", "Noto Sans CJK SC", monospace;
  font-size: 16px;
  line-height: 20px;
}

.combo::before {
  content: '';
  position: absolute;
  top: 0;
  right: 0;
  bottom: 0;
  width: 26px;
  background: #f0f0f0;
  border: 1px solid;
  border-color: #fff #696969 #696969 #fff;
  box-shadow: inset -1px -1px #a0a0a0;
}

.combo::after {
  content: '';
  position: absolute;
  top: 8px;
  right: 8px;
  border: 5px solid transparent;
  border-top-color: #000;
  border-bottom: none;
}

.combo-zoom {
  width: 96px;
  margin-left: 3px;
}

.combo-zoom select {
  font-size: 14px;
}

.combo-lang {
  width: 147px;
  margin-left: 3px;
}

.combo-state {
  width: 109px;
  margin-left: 3px;
}

/* Child windows */
.workspace {
  position: relative;
  flex: 1;
  border-top: 2px solid #696969;
  background: #ababab;
}

.window {
  position: absolute;
  display: flex;
  flex-direction: column;
  padding: 0 10px 10px;
  border: 1px solid #444;
  border-radius: 7px 7px 0 0;
  background: linear-gradient(#c0cddc 0, #c8d5e3 26px, #d7e4f2 42px);
  box-shadow: inset 0 0 0 1px #eef3fa;
}

.window-back {
  top: 190px;
  right: 10px;
  bottom: 3px;
  left: 189px;
}

.window-front {
  top: 152px;
  right: 48px;
  bottom: 41px;
  left: 151px;
}

.window-title {
  display: flex;
  align-items: center;
  gap: 5px;
  height: 44px;
  padding: 8px 2px 0;
  color: #999;
  font-family: "Open Sans", "Noto Sans CJK SC", sans-serif;
  font-weight: 300;
}

.window-icon {
  width: 23px;
  height: 19px;
  stroke: none;
}

.window-buttons {
  display: flex;
  gap: 2px;
  margin-left: auto;
}

.window-buttons button {
  width: 50px;
  height: 29px;
  border: 1px solid #8494ae;
  border-radius: 2px;
  background: #c3d1e2;
  box-shadow: inset 0 0 0 1px #d5e0ed;
}

.window-buttons svg {
  width: 20px;
  height: 18px;
}

.window-client {
  flex: 1;
  display: grid;
  grid-template: 1fr 26px / 1fr 26px;
  border: 2px solid;
  border-color: #808080 #e8e8e8 #e8e8e8 #808080;
  background: #fff;
}

.canvas {
  position: relative;
  background: #c0c0c0;
  border-left: 1px solid #333;
}

.scroll {
  display: flex;
  background: #f0f0f0;
}

.scroll button {
  width: 26px;
  height: 26px;
  color: #606060;
}

.scroll svg {
  width: 14px;
  height: 14px;
  stroke-width: 3;
}

.track {
  flex: 1;
}

.thumb {
  background: #cdcdcd;
}

.scroll-v {
  flex-direction: column;
  border-left: 1px solid #fff;
}

.scroll-v .thumb {
  height: 226px;
  margin-top: 24px;
}

.scroll-h {
  border-top: 1px solid #fff;
}

.scroll-h .thumb {
  width: 88%;
  height: 24px;
}

.size-grip {
  display: flex;
  align-items: end;
  justify-content: end;
  padding: 3px;
  background: #f0f0f0;
}

.size-grip svg {
  width: 12px;
  height: 12px;
  fill: #bfbfbf;
  stroke: none;
}

/* Items on the drawing canvas */
.screen-edge {
  position: absolute;
  top: 0;
  bottom: 0;
  left: 1079px;
  border-left: 1px solid #505050;
}

.lamp {
  position: absolute;
  top: 250px;
  left: 254px;
  width: 84px;
  height: 84px;
  padding: 12px;
  border-radius: 50%;
  background: linear-gradient(#9a9a9a, #4c4c4c);
}

.lamp::before {
  content: '';
  display: block;
  height: 60px;
  border-radius: 50%;
  background: #bf3122;
}

.hmi-button {
  position: absolute;
  left: 195px;
  width: 201px;
  height: 73px;
  padding-bottom: 3px;
  border-radius: 6px;
  background: linear-gradient(#999, #4c4c4c);
  color: #ddd;
  font-size: 21px;
}

.hmi-start {
  top: 379px;
}

.hmi-stop {
  top: 552px;
}

.field {
  position: absolute;
  display: flex;
  width: 201px;
  height: 73px;
  border: 2px solid #000;
  background: #fff;
  font-family: "Liberation Mono", monospace;
  font-size: 20px;
  line-height: 72px;
  text-align: center;
}

.field-name {
  width: 101px;
  border-right: 2px solid #000;
  background: #00f;
}

.field-name.green {
  background: #060;
}

.field-value {
  flex: 1;
  padding-right: 3px;
}

.field-hmi-a {
  top: 383px;
  left: 473px;
}

.field-hmi-b {
  top: 552px;
  left: 473px;
}

.field-a {
  top: 379px;
  left: 751px;
}

.field-b {
  top: 552px;
  left: 751px;
}

/* Floating toolbox */
.toolbox {
  position: absolute;
  top: 67px;
  left: 1401px;
  padding: 0 4px 12px;
  background: #f0f0f0;
  box-shadow: 0 2px 8px rgba(0, 0, 0, 0.45);
}

.toolbox-title {
  display: flex;
  align-items: center;
  justify-content: space-between;
  height: 45px;
  margin: 0 -4px 1px;
  padding: 0 1px 0 11px;
  background: #fff;
  color: #999;
  font-weight: 300;
}

.toolbox-title button {
  align-self: end;
  width: 30px;
  height: 30px;
  margin-bottom: 4px;
  background: #e5e5e5;
  color: #f8f8f8;
  font-weight: 700;
}

.toolbox-grid {
  display: grid;
  grid-template-columns: repeat(3, 27px);
}

.toolbox-grid button {
  height: 24px;
}

.toolbox-grid svg {
  width: 22px;
  height: 20px;
  shape-rendering: crispEdges;
}

/* Download dialog */
.dialog {
  position: absolute;
  top: 448px;
  left: 1297px;
  width: 567px;
  border: 1px solid #555;
  background: #f0f0f0;
  box-shadow: 0 5px 22px rgba(0, 0, 0, 0.4);
  font-size: 16px;
  line-height: 20px;
}

.dialog-title {
  display: flex;
  align-items: center;
  justify-content: space-between;
  height: 44px;
  padding: 0 17px 2px 12px;
  background: #fff;
}

.dialog-title h1 {
  font-size: 18px;
  font-weight: 400;
}

.dialog-title svg {
  width: 16px;
  height: 16px;
}

.dialog-body {
  padding: 23px 17px 25px 15px;
}

.dialog-top {
  display: flex;
  justify-content: space-between;
}

.row {
  display: flex;
  align-items: center;
  height: 34px;
  margin-bottom: 4px;
}

.row-host {
  height: 44px;
  margin-bottom: 0;
}

.row-label {
  width: 80px;
  padding-bottom: 2px;
}

.radio {
  display: flex;
  align-items: center;
  gap: 7px;
  margin: 0 47px 0 2px;
}

.radio:last-child {
  margin-right: 0;
}

input[type="radio"],
input[type="checkbox"] {
  display: grid;
  place-items: center;
  width: 16px;
  height: 16px;
  appearance: none;
  border: 2px solid;
  border-color: #808080 #e3e3e3 #e3e3e3 #808080;
  background: #fff;
}

input[type="radio"] {
  border-radius: 50%;
}

input[type="radio"]:checked::before {
  content: '';
  width: 8px;
  height: 8px;
  border-radius: 50%;
  background: #000;
}

input[type="checkbox"] {
  width: 18px;
  height: 18px;
}

input[type="checkbox"]:checked::before {
  content: '';
  width: 10px;
  height: 10px;
  background: #000;
  clip-path: polygon(0 40%, 35% 65%, 100% 0, 100% 35%, 35% 100%, 0 75%);
}

input[type]:disabled {
  background: #f0f0f0;
}

.combo-link {
  width: 184px;
  background: #f0f0f0;
  color: #888;
}

.combo-link select {
  padding-left: 1px;
  font-family: "Noto Sans CJK SC", sans-serif;
  line-height: 18px;
  opacity: 1;
}

.combo-link::after {
  border-top-color: #a0a0a0;
}

.ip {
  display: flex;
  align-items: center;
  width: 184px;
  height: 29px;
  padding: 0 5px 4px;
  border: 2px solid;
  border-color: #808080 #fff #fff #808080;
  color: #777;
  font-family: "Liberation Mono", monospace;
  font-size: 14px;
}

.ip input {
  flex: 1;
  min-width: 0;
  border: none;
  text-align: center;
}

.actions {
  display: grid;
  grid-template-columns: 118px 118px;
  grid-auto-rows: 35px;
  gap: 7px 12px;
}

.actions button {
  padding-bottom: 3px;
  border: 1px solid;
  border-color: #fff #696969 #696969 #fff;
  box-shadow: inset -1px -1px #a0a0a0;
}

.actions .default {
  border-color: #696969;
  box-shadow: inset -1px -1px #696969, inset 1px 1px #fff;
}

.options {
  display: grid;
  grid-template-columns: 175px 1fr;
  grid-auto-rows: 25px;
  width: 402px;
  padding: 6px 0 5px 54px;
  border: 1px solid #a0a0a0;
  box-shadow: 1px 1px #fff, inset 1px 1px #fff;
}

.options legend {
  margin-left: -47px;
  padding: 0 3px;
}

.options label {
  display: flex;
  align-items: center;
  gap: 7px;
}

.options .off {
  color: #a0a0a0;
}

.log-label {
  padding: 2px 3px 8px;
}

.log {
  height: 270px;
  margin-left: 3px;
  border: 2px solid;
  border-color: #808080 #e3e3e3 #e3e3e3 #808080;
  background: #fff;
  line-height: 14px;
}

.log p {
  height: 17px;
  white-space: pre;
}

.ascii {
  font-family: "Liberation Mono", monospace;
  font-size: 13px;
}

.progress-row {
  display: flex;
  align-items: center;
  gap: 15px;
  padding: 10px 0 0 3px;
}

.progress-row span {
  padding-bottom: 3px;
  line-height: 17px;
}

.progress {
  flex: 1;
  height: 20px;
  border: 1px solid;
  border-color: #a0a0a0 #fff #fff #a0a0a0;
}

/* Overlays */
.drag-strip {
  position: absolute;
  top: 0;
  left: 1096px;
  width: 362px;
  height: 2px;
  background: linear-gradient(90deg, #0078d7 72px, #e5e5e5 72px);
}

.marks {
  position: absolute;
  top: 0;
  left: 0;
  width: 100%;
  height: 100%;
  stroke: #ff5500;
  stroke-width: 6;
  stroke-linecap: round;
  stroke-linejoin: round;
  pointer-events: none;
}

.watermark {
  position: absolute;
  right: 14px;
  bottom: 5px;
  color: #8c8c8c;
  font-size: 20px;
  font-weight: 300;
  text-shadow: -1px -1px #fff;
}
```
